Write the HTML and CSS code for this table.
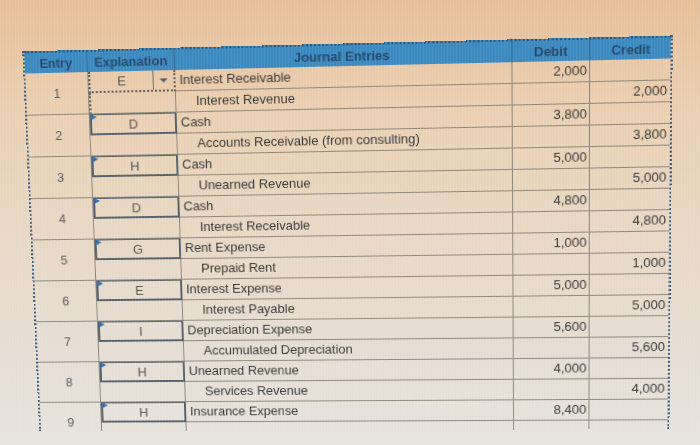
FILE: index.html
```html
<!DOCTYPE html>
<html lang="en">
<head>
<meta charset="utf-8">
<title>Journal Entries</title>
<link rel="stylesheet" href="styles.css">
</head>
<body>
<div class="stage">
  <div class="sheet">
    <div class="head">
      <div class="hcell">Entry</div>
      <div class="hcell">Explanation</div>
      <div class="hcell">Journal Entries</div>
      <div class="hcell">Debit</div>
      <div class="hcell">Credit</div>
    </div>
    <div class="clip">
      <div class="body">
        <div class="entry">1</div>
        <div class="expl focus"><span class="sel">E</span><span class="drop"><span class="arrow"></span></span></div>
        <div class="acct">Interest Receivable</div>
        <div class="num">2,000</div>
        <div class="num cr"></div>
        <div class="expl blank dotl"></div>
        <div class="acct in">Interest Revenue</div>
        <div class="num"></div>
        <div class="num cr">2,000</div>

        <div class="entry">2</div>
        <div class="expl box">D</div>
        <div class="acct">Cash</div>
        <div class="num">3,800</div>
        <div class="num cr"></div>
        <div class="expl blank"></div>
        <div class="acct in">Accounts Receivable (from consulting)</div>
        <div class="num"></div>
        <div class="num cr">3,800</div>

        <div class="entry">3</div>
        <div class="expl box">H</div>
        <div class="acct">Cash</div>
        <div class="num">5,000</div>
        <div class="num cr"></div>
        <div class="expl blank"></div>
        <div class="acct in">Unearned Revenue</div>
        <div class="num"></div>
        <div class="num cr">5,000</div>

        <div class="entry">4</div>
        <div class="expl box">D</div>
        <div class="acct">Cash</div>
        <div class="num">4,800</div>
        <div class="num cr"></div>
        <div class="expl blank"></div>
        <div class="acct in">Interest Receivable</div>
        <div class="num"></div>
        <div class="num cr">4,800</div>

        <div class="entry">5</div>
        <div class="expl box">G</div>
        <div class="acct">Rent Expense</div>
        <div class="num">1,000</div>
        <div class="num cr"></div>
        <div class="expl blank"></div>
        <div class="acct in">Prepaid Rent</div>
        <div class="num"></div>
        <div class="num cr">1,000</div>

        <div class="entry">6</div>
        <div class="expl box">E</div>
        <div class="acct">Interest Expense</div>
        <div class="num">5,000</div>
        <div class="num cr"></div>
        <div class="expl blank"></div>
        <div class="acct in">Interest Payable</div>
        <div class="num"></div>
        <div class="num cr">5,000</div>

        <div class="entry">7</div>
        <div class="expl box">I</div>
        <div class="acct">Depreciation Expense</div>
        <div class="num">5,600</div>
        <div class="num cr"></div>
        <div class="expl blank"></div>
        <div class="acct in">Accumulated Depreciation</div>
        <div class="num"></div>
        <div class="num cr">5,600</div>

        <div class="entry">8</div>
        <div class="expl box">H</div>
        <div class="acct">Unearned Revenue</div>
        <div class="num">4,000</div>
        <div class="num cr"></div>
        <div class="expl blank"></div>
        <div class="acct in">Services Revenue</div>
        <div class="num"></div>
        <div class="num cr">4,000</div>

        <div class="entry">9</div>
        <div class="expl box">H</div>
        <div class="acct">Insurance Expense</div>
        <div class="num">8,400</div>
        <div class="num cr"></div>
        <div class="expl blank"></div>
        <div class="acct in"></div>
        <div class="num"></div>
        <div class="num cr"></div>
      </div>
    </div>
  </div>
</div>
</body>
</html>
```
FILE: styles.css
```css
html, body {
  margin: 0;
  padding: 0;
}
body {
  width: 700px;
  height: 445px;
  overflow: hidden;
  position: relative;
  font-family: "Liberation Sans", Arial, sans-serif;
  background: linear-gradient(to bottom, #e6bf98 0%, #ead0b3 25%, #e8d9c6 55%, #e6ded4 80%, #e7e3de 100%);
}
body::after {
  content: "";
  position: absolute;
  inset: 0;
  pointer-events: none;
  background: repeating-linear-gradient(90deg, rgba(255,255,255,0.07) 0 1px, transparent 1px 3px);
}
.stage {
  padding: 46px 0 0 25px;
}
.sheet {
  width: 641px;
  border-left: 2px dotted #3b5c7e;
  border-right: 2px dotted #3b5c7e;
  box-sizing: border-box;
  transform-origin: 50% 50%;
  transform: perspective(1000px) rotateY(-3deg) rotateX(-4.8deg) rotate(-0.8deg);
}
.head, .body {
  display: grid;
  grid-template-columns: 64px 88px 333px 75px 78px;
}
.head {
  grid-template-rows: 20px;
  background: #3b89bf;
  border-top: 2px dotted #2f5479;
}
.hcell {
  display: flex;
  align-items: center;
  justify-content: center;
  font-size: 13px;
  font-weight: bold;
  color: #24476a;
  border-right: 1px solid #2f6590;
}
.hcell:last-child { border-right: none; }
.clip {
  height: 366px;
  overflow: hidden;
}
.body {
  grid-auto-rows: 21px;
  font-size: 13px;
  color: #363636;
}
.body > div {
  box-sizing: border-box;
  border-right: 1px solid #8d877b;
  border-bottom: 1px solid #8d877b;
  line-height: 20px;
  white-space: nowrap;
}
.body > .cr { border-right: none; }
.entry {
  grid-row: span 2;
  display: flex;
  align-items: center;
  justify-content: center;
  color: #5a5a5a;
}
.expl {
  position: relative;
  text-align: center;
  color: #555;
}
.body > .box {
  border: 2px solid #56606a;
  border-top-width: 1px;
}
.box::before {
  content: "";
  position: absolute;
  left: -1px;
  top: -1px;
  border-left: 6px solid #2d6db2;
  border-top: 3px solid transparent;
  border-bottom: 3px solid transparent;
}
.body > .focus {
  border: 2px dotted #5b5b5b;
  border-top: none;
  display: flex;
}
.sel {
  flex: 1;
  text-align: center;
}
.drop {
  width: 20px;
  border-left: 1px solid #6b6b6b;
  display: flex;
  align-items: center;
  justify-content: center;
}
.arrow {
  width: 0;
  height: 0;
  border-left: 4px solid transparent;
  border-right: 4px solid transparent;
  border-top: 4px solid #3d5a78;
}
.body > .dotl {
  border-left: 2px dotted #5b5b5b;
}
.acct {
  padding-left: 4px;
}
.acct.in {
  padding-left: 20px;
}
.num {
  text-align: right;
  padding-right: 2px;
}
.num.cr {
  padding-right: 4px;
}
```
